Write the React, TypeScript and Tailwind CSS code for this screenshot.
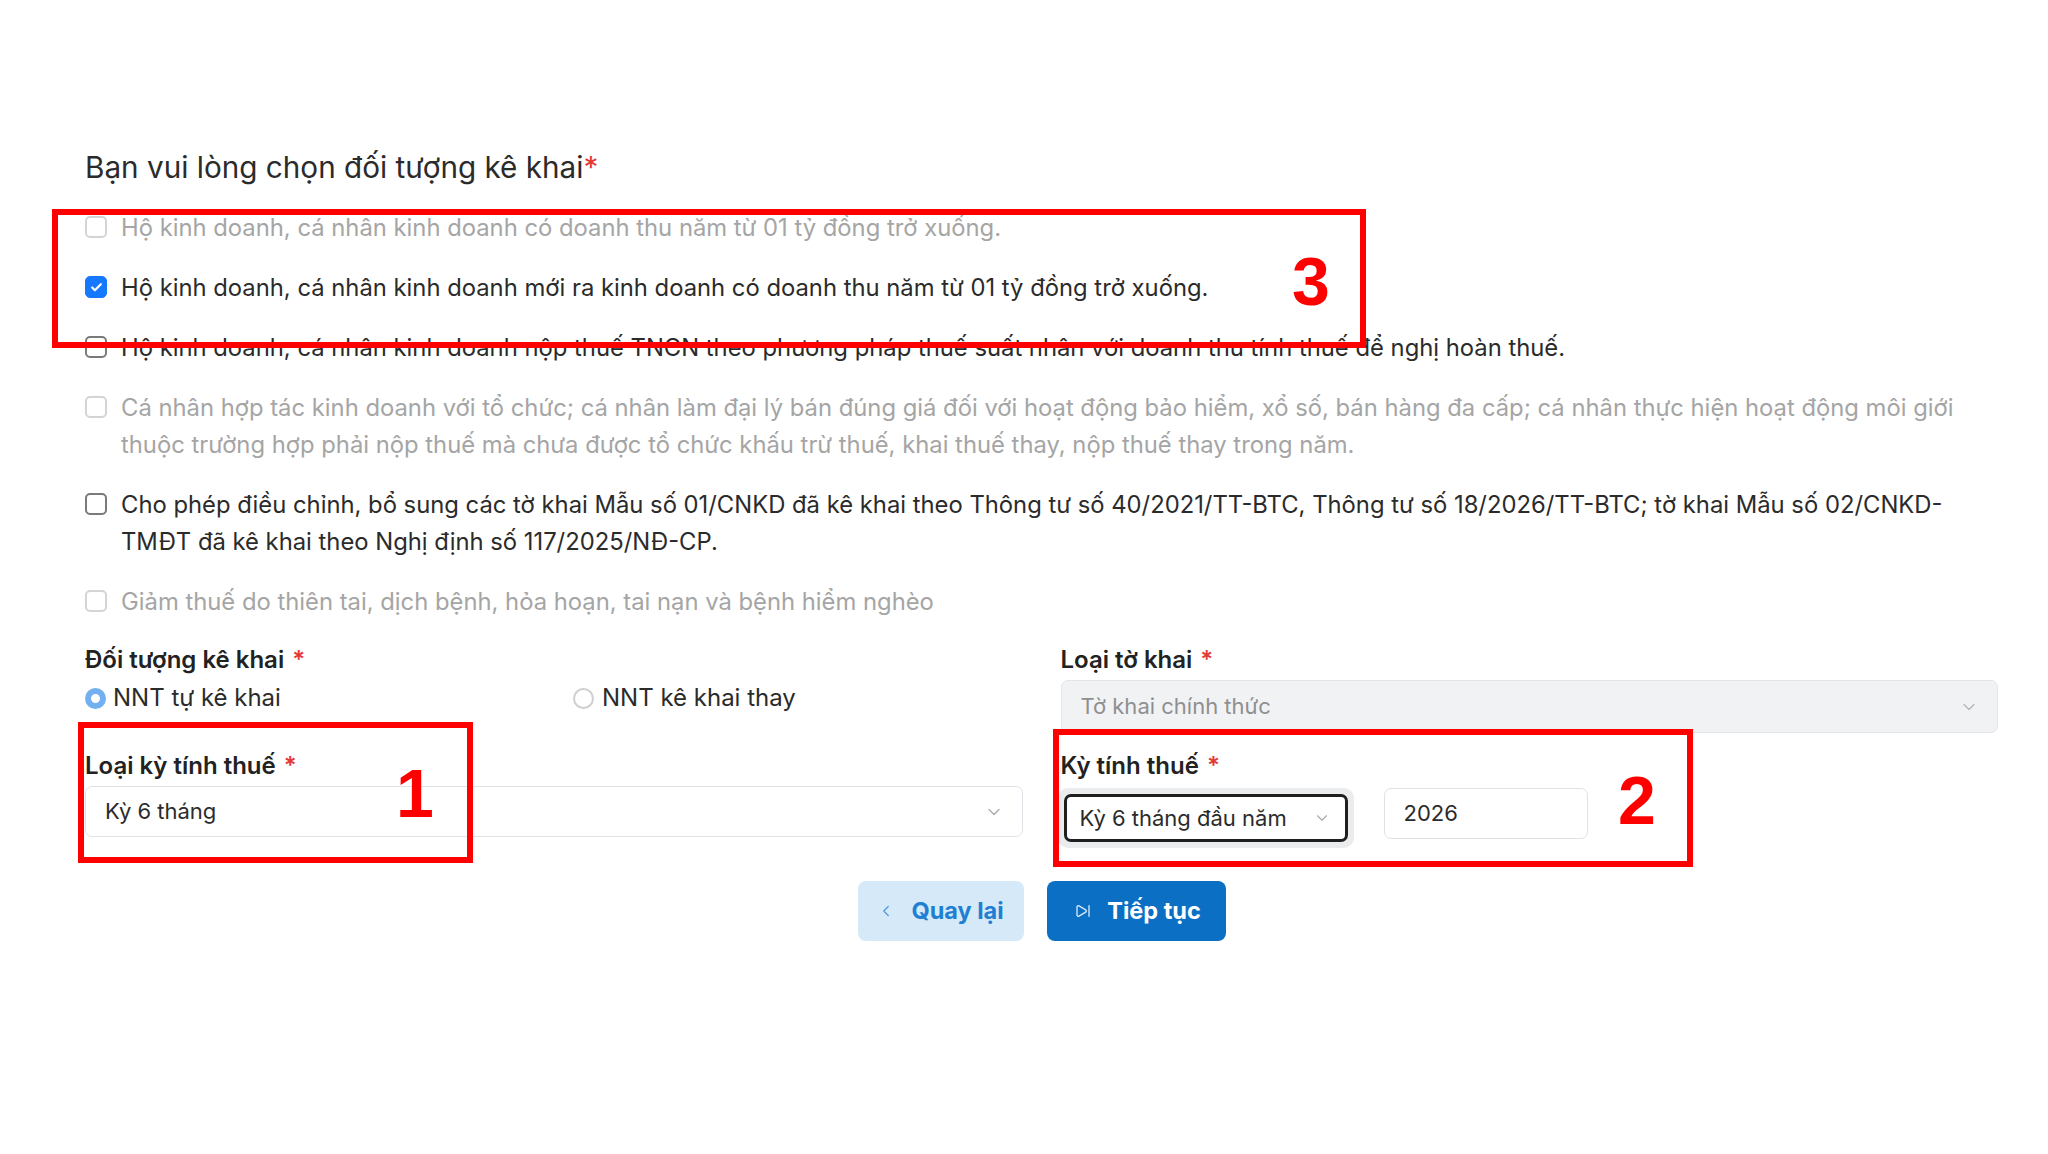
import React, { useState } from 'react';
import { ChevronDown, ChevronLeft, SkipForward, Check } from 'lucide-react';

const options = [
  { id: 1, disabled: true, text: 'Hộ kinh doanh, cá nhân kinh doanh có doanh thu năm từ 01 tỷ đồng trở xuống.' },
  { id: 2, disabled: false, text: 'Hộ kinh doanh, cá nhân kinh doanh mới ra kinh doanh có doanh thu năm từ 01 tỷ đồng trở xuống.' },
  { id: 3, disabled: false, text: 'Hộ kinh doanh, cá nhân kinh doanh nộp thuế TNCN theo phương pháp thuế suất nhân với doanh thu tính thuế để nghị hoàn thuế.' },
  {
    id: 4,
    disabled: true,
    text: 'Cá nhân hợp tác kinh doanh với tổ chức; cá nhân làm đại lý bán đúng giá đối với hoạt động bảo hiểm, xổ số, bán hàng đa cấp; cá nhân thực hiện hoạt động môi giới thuộc trường hợp phải nộp thuế mà chưa được tổ chức khấu trừ thuế, khai thuế thay, nộp thuế thay trong năm.',
  },
  {
    id: 5,
    disabled: false,
    text: 'Cho phép điều chỉnh, bổ sung các tờ khai Mẫu số 01/CNKD đã kê khai theo Thông tư số 40/2021/TT-BTC, Thông tư số 18/2026/TT-BTC; tờ khai Mẫu số 02/CNKD-TMĐT đã kê khai theo Nghị định số 117/2025/NĐ-CP.',
  },
  { id: 6, disabled: true, text: 'Giảm thuế do thiên tai, dịch bệnh, hỏa hoạn, tai nạn và bệnh hiểm nghèo' },
];

function Required() {
  return <span className="text-[#e53935] ml-[8px]">*</span>;
}

export default function App() {
  const [selected, setSelected] = useState<number>(2);
  const [mode, setMode] = useState<'self' | 'proxy'>('self');

  return (
    <div className="relative w-full min-h-[1154px] bg-white font-['Inter',sans-serif] text-[#2b2b2b]">
      <div className="pl-[85px] pr-[50px] pt-[149px]">
        {/* Title */}
        <h1 className="text-[29.7px] leading-[36px] text-[#2b2b2b] mb-[24px]">
          Bạn vui lòng chọn đối tượng kê khai<span className="text-[#e53935]">*</span>
        </h1>

        {/* Options */}
        <div className="flex flex-col gap-[23px]">
          {options.map((o) => {
            const checked = selected === o.id;
            return (
              <label key={o.id} className="flex items-start gap-[14px] cursor-pointer" onClick={() => !o.disabled && setSelected(o.id)}>
                <span
                  className={`mt-[7px] w-[22px] h-[22px] shrink-0 rounded-[5px] flex items-center justify-center ${
                    checked
                      ? 'bg-[#1677ff] border border-[#1677ff]'
                      : o.disabled
                        ? 'border-2 border-[#d4d4d4] bg-white'
                        : 'border-2 border-[#7a7a7a] bg-white'
                  }`}
                >
                  {checked && <Check className="w-[13px] h-[13px] text-white" strokeWidth={4} />}
                </span>
                <span className={`text-[23.8px] leading-[37px] ${o.disabled ? 'text-[#a5a5a5]' : 'text-[#2b2b2b]'}`}>{o.text}</span>
              </label>
            );
          })}
        </div>

        {/* Form */}
        <div className="grid grid-cols-2 gap-x-[38px] mt-[25px]">
          <div>
            <div className="text-[24px] leading-[30px] font-semibold text-[#222]">
              Đối tượng kê khai<Required />
            </div>
            <div className="flex items-center h-[34px] mt-[6px]">
              <button className="flex items-center gap-[7px] w-[488px]" onClick={() => setMode('self')}>
                <span
                  className={`w-[21px] h-[21px] rounded-full bg-white ${
                    mode === 'self' ? 'border-[6px] border-[#72b0f0]' : 'border-2 border-[#cfcfcf]'
                  }`}
                />
                <span className="text-[24px] text-[#2b2b2b]">NNT tự kê khai</span>
              </button>
              <button className="flex items-center gap-[8px]" onClick={() => setMode('proxy')}>
                <span
                  className={`w-[21px] h-[21px] rounded-full bg-white ${
                    mode === 'proxy' ? 'border-[6px] border-[#72b0f0]' : 'border-2 border-[#cfcfcf]'
                  }`}
                />
                <span className="text-[24px] text-[#2b2b2b]">NNT kê khai thay</span>
              </button>
            </div>
          </div>

          <div>
            <div className="text-[24px] leading-[30px] font-semibold text-[#222]">
              Loại tờ khai<Required />
            </div>
            <div className="mt-[5px] h-[53px] rounded-[7px] border border-[#e3e5e8] bg-[#f1f2f4] flex items-center justify-between pl-[19px] pr-[18px]">
              <span className="text-[22px] text-[#8f8f8f]">Tờ khai chính thức</span>
              <ChevronDown className="w-[20px] h-[20px] text-[#b5b5b5]" strokeWidth={1.5} />
            </div>
          </div>

          <div className="mt-[18px]">
            <div className="text-[24px] leading-[30px] font-semibold text-[#222]">
              Loại kỳ tính thuế<Required />
            </div>
            <div className="mt-[5px] h-[51px] rounded-[7px] border border-[#dfe2e6] bg-white flex items-center justify-between pl-[19px] pr-[18px]">
              <span className="text-[22px] text-[#2b2b2b]">Kỳ 6 tháng</span>
              <ChevronDown className="w-[20px] h-[20px] text-[#a9a9a9]" strokeWidth={1.5} />
            </div>
          </div>

          <div className="mt-[18px]">
            <div className="text-[24px] leading-[30px] font-semibold text-[#222]">
              Kỳ tính thuế<Required />
            </div>
            <div className="flex items-start gap-[30px] mt-[7px]">
              <div className="rounded-[10px] bg-[#ebecee] p-[6px] -ml-[3px]">
                <div className="w-[284px] h-[48px] rounded-[7px] border-[3px] border-[#1f1f1f] bg-white flex items-center justify-between pl-[13px] pr-[14px]">
                  <span className="text-[22px] text-[#2b2b2b]">Kỳ 6 tháng đầu năm</span>
                  <ChevronDown className="w-[18px] h-[18px] text-[#a9a9a9]" strokeWidth={1.5} />
                </div>
              </div>
              <div className="w-[204px] h-[51px] rounded-[7px] border border-[#dfe2e6] bg-white flex items-center pl-[19px]">
                <span className="text-[22px] text-[#2b2b2b]">2026</span>
              </div>
            </div>
          </div>
        </div>

        {/* Actions */}
        <div className="flex justify-center gap-[23px] mt-[33px]">
          <button className="h-[60px] w-[166px] rounded-[8px] bg-[#d5e9f9] flex items-center justify-center gap-[16px] text-[#1f7fd2] font-bold text-[23.5px]">
            <ChevronLeft className="w-[18px] h-[28px] text-[#4f97d8]" strokeWidth={1.6} />
            Quay lại
          </button>
          <button className="h-[60px] w-[179px] rounded-[8px] bg-[#0b6fc3] flex items-center justify-center gap-[16px] pl-[4px] text-white font-bold text-[23.5px]">
            <SkipForward className="w-[16px] h-[16px] text-[#d6e9fb]" strokeWidth={2} />
            Tiếp tục
          </button>
        </div>
      </div>

      {/* Annotation overlays */}
      <div className="absolute left-[52px] top-[209px] w-[1314px] h-[139px] border-[6px] border-[#ff0000] pointer-events-none" />
      <div className="absolute left-[1292px] top-[236px] font-['Liberation_Sans',sans-serif] font-bold text-[68px] leading-[90px] text-[#ff0000]">3</div>

      <div className="absolute left-[78px] top-[722px] w-[395px] h-[141px] border-[6px] border-[#ff0000] pointer-events-none" />
      <div className="absolute left-[396px] top-[748px] font-['Liberation_Sans',sans-serif] font-bold text-[68px] leading-[90px] text-[#ff0000]">1</div>

      <div className="absolute left-[1053px] top-[729px] w-[640px] h-[138px] border-[6px] border-[#ff0000] pointer-events-none" />
      <div className="absolute left-[1618px] top-[755px] font-['Liberation_Sans',sans-serif] font-bold text-[68px] leading-[90px] text-[#ff0000]">2</div>
    </div>
  );
}
